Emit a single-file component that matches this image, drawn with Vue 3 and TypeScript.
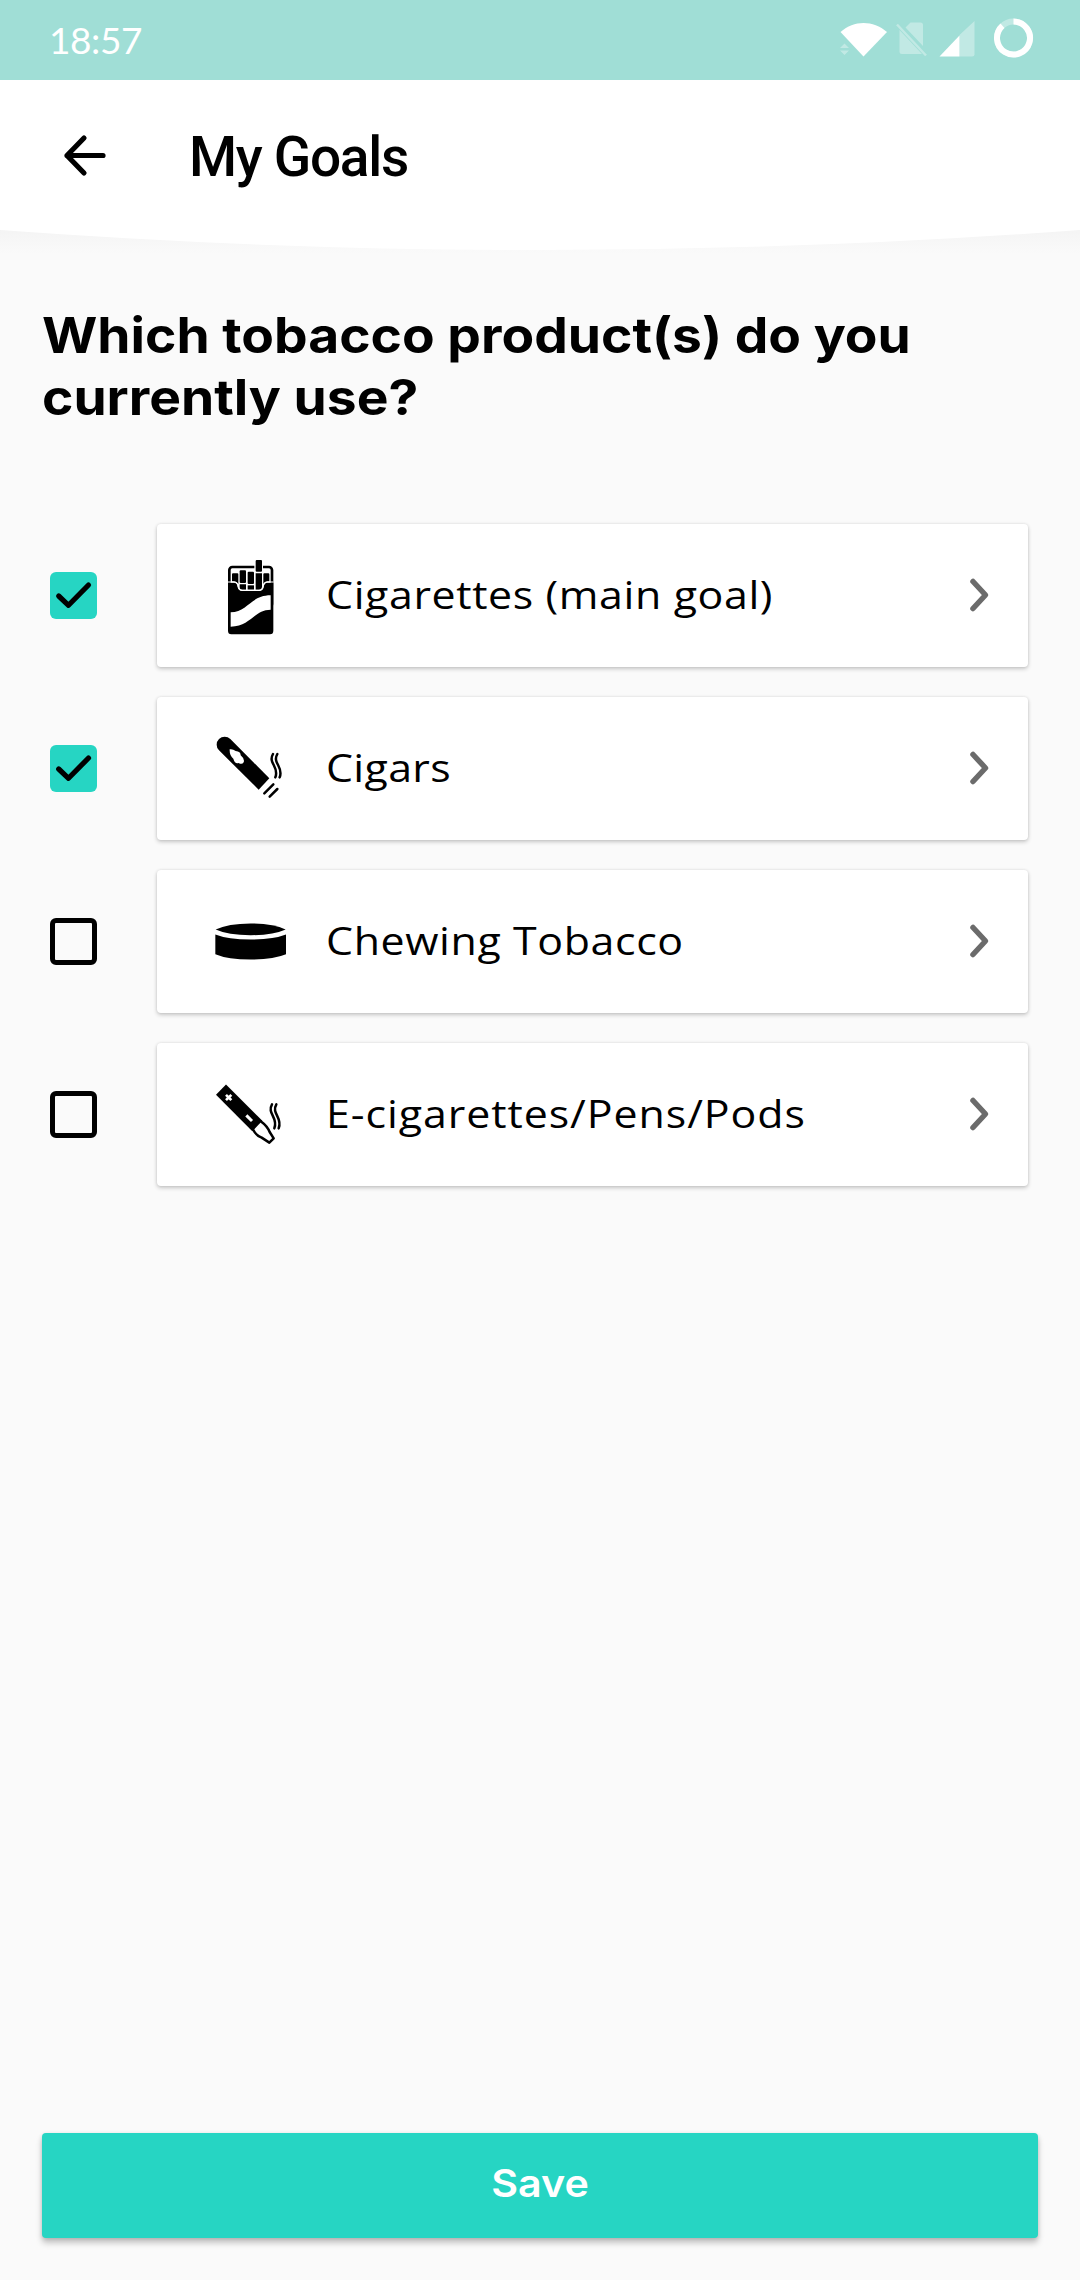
<script setup lang="ts">
import { reactive } from 'vue'

type IconName = 'pack' | 'cigar' | 'chew' | 'vape'

interface Product {
  id: IconName
  label: string
  checked: boolean
}

const products = reactive<Product[]>([
  { id: 'pack', label: 'Cigarettes (main goal)', checked: true },
  { id: 'cigar', label: 'Cigars', checked: true },
  { id: 'chew', label: 'Chewing Tobacco', checked: false },
  { id: 'vape', label: 'E-cigarettes/Pens/Pods', checked: false },
])
</script>

<template>
  <div class="screen">
    <div class="status">
      <span class="clock">18:57</span>
      <svg class="status-icons" width="200" height="48" viewBox="0 0 200 48" fill="#fff">
        <path d="M0.5 14C14 2 33 2 47 14L23.500 38.500Z" />
        <g opacity="0.35">
          <path d="M0 30L4.500 25.500L9 30ZM0 32.500H9L4.500 37Z" />
          <path d="M65.500 9.500L70.500 4.500H80.500Q83 4.500 83 7V28Z" />
          <path d="M59.500 12L82 36H62Q59.500 36 59.500 33.500Z" />
          <path d="M57 6.500L86 37.500" stroke="#fff" stroke-width="2.500" />
          <path d="M119.500 17L134.500 3V36.500Q134.500 38.500 132 38.500H119.500Z" />
        </g>
        <path d="M99.500 38.500L119.500 17.500V38.500Z" />
        <circle cx="173.500" cy="20" r="16.500" fill="none" stroke="#fff" stroke-opacity="0.35" stroke-width="6" />
        <path d="M173.500 3.500A16.500 16.500 0 1 1 162.500 7.700" fill="none" stroke="#fff" stroke-width="6" />
      </svg>
    </div>

    <header class="header">
      <svg class="back" width="48" height="48" viewBox="0 0 48 48">
        <path d="M24 6L7 23.500L24 41M7 23.500H43" />
      </svg>
      <h1 class="title">My Goals</h1>
    </header>
    <svg class="curve" width="1080" height="50" viewBox="0 0 1080 50">
      <defs>
        <linearGradient id="shade" x1="0" y1="0" x2="0" y2="1">
          <stop offset="0.25" stop-color="#f4f4f4" />
          <stop offset="1" stop-color="#fafafa" />
        </linearGradient>
      </defs>
      <rect width="1080" height="34" fill="url(#shade)" />
      <path d="M0 0H1080V10Q810 30 540 30T0 10Z" fill="#fff" />
    </svg>

    <main class="content">
      <h2 class="question">Which tobacco product(s) do you<br />currently use?</h2>

      <ul class="list">
        <li v-for="p in products" :key="p.id" class="row">
          <button class="box" :class="{ on: p.checked }" @click="p.checked = !p.checked">
            <svg v-if="p.checked" width="47" height="47" viewBox="0 0 47 47">
              <path d="M8.700 24L18.500 33.300L38.500 13" />
            </svg>
          </button>
          <div class="card">
            <svg class="icon" width="96" height="96" viewBox="0 0 288 288">
              <g v-if="p.id === 'pack'">
                <rect x="79" y="57" width="128" height="120" rx="9" fill="none" stroke="#000" stroke-width="8" />
                <path d="M75 104H93Q103 104 104 116Q106 129 118 129H168Q180 129 182 116Q184 104 193 104H211V248Q211 258.500 201 258.500H85Q75 258.500 75 248Z" />
                <path d="M108 104H178V118Q176 125 168 125H118Q110 125 108 118Z" fill="#fff" />
                <path d="M87 79Q87 76 90 76H103Q106 76 106 79V108Q100 100 93 100H87Z" />
                <path d="M181 79Q181 76 184 76H196Q199 76 199 79V100H193Q186 100 181 108Z" />
                <rect x="110" y="67" width="19" height="38" rx="3" />
                <path d="M110 109H129V125H118Q110 125 110 117Z" />
                <rect x="134" y="71" width="19" height="37" rx="3" />
                <rect x="134" y="112" width="19" height="13" />
                <rect x="154" y="36" width="26" height="38" fill="#fff" />
                <rect x="158" y="36" width="19" height="35" rx="3" />
                <path d="M158 76H177V116Q176 125 168 125H158Z" />
                <path d="M75 102H93Q103 102 105 114Q107 127 118 127H168Q179 127 181 114Q183 102 193 102H211" fill="none" stroke="#fff" stroke-width="3.500" />
                <path d="M83 193C133 193 143 142 203 142V185C153 185 143 236 83 236Z" fill="#fff" />
              </g>
              <g v-else-if="p.id === 'cigar'">
                <path d="M82 54L199 172L167 206L48 88A24 24 0 0 1 82 54Z" />
                <path d="M80 85Q89 83 98 90Q113 91 113 103Q126 114 122 124Q117 132 107 126Q96 130 91 113Q79 103 80 85Z" fill="#fff" />
                <g class="line">
                  <path d="M211 190L184 217M223 204L200 227" />
                  <path d="M210 99C194 127 230 137 217 169M223 99C207 127 243 137 230 169" />
                </g>
              </g>
              <g v-else-if="p.id === 'chew'">
                <path d="M38 106.500Q75 88.500 143 88.500T248 106.500Q211 123.500 143 123.500T38 106.500Z" />
                <path d="M37 121.500Q75 136.500 143 136.500T249 121.500V180.500Q211 196.500 143 196.500T37 180.500Z" />
              </g>
              <g v-else>
                <path d="M69 52.500L178 161.500L148 192.500L39 83.500Z" />
                <path d="M77 91.500m-8 -8l16 16m0 -16l-16 16" fill="none" stroke="#fff" stroke-width="8" />
                <path d="M130 145L147 162" stroke="#fff" stroke-width="9" />
                <g class="line">
                  <path d="M151 189Q159 205 176 212L199 227L212 214L200 195Q193 177 175 164" />
                  <path d="M207 112C191 140 227 152 214 184M220 112C204 140 240 152 227 184" />
                </g>
              </g>
            </svg>
            <span class="label" :class="p.id">{{ p.label }}</span>
            <svg class="chevron" width="24" height="36" viewBox="0 0 24 36">
              <path d="M5 4.500L17.500 18L5 31.500" />
            </svg>
          </div>
        </li>
      </ul>
    </main>

    <footer class="footer">
      <button class="save"><span class="save-text">Save</span></button>
    </footer>
  </div>
</template>

<style>
body {
  margin: 0;
  background: #fafafa;
}
</style>

<style scoped>
.screen {
  width: 1080px;
  height: 2280px;
  display: flex;
  flex-direction: column;
  background: #fafafa;
  font-family: Inter, 'Liberation Sans', sans-serif;
  color: #000;
  overflow: hidden;
}
.status {
  height: 80px;
  flex: none;
  background: #a0ded6;
  display: flex;
  justify-content: space-between;
  align-items: center;
  padding: 0 40px 0 49px;
  box-sizing: border-box;
}
.clock {
  font: 400 37px/48px Lato, sans-serif;
  letter-spacing: -0.400px;
  color: #fff;
}
.status-icons {
  margin-top: 4px;
}
.header {
  height: 140px;
  flex: none;
  display: flex;
  align-items: center;
  padding: 0 60px;
  box-sizing: border-box;
  background: #fff;
}
.back {
  margin-top: 11px;
  fill: none;
  stroke: #000;
  stroke-width: 5.200;
  stroke-linecap: round;
  stroke-linejoin: round;
}
.title {
  margin: 13px 0 0 81px;
  font: 500 55px/64px Roboto, sans-serif;
  letter-spacing: -1.300px;
}
.curve {
  flex: none;
  display: block;
}
.content {
  flex: 1;
  padding: 35px 52px 0 42px;
}
.question {
  margin: 0;
  font-size: 49px;
  line-height: 62px;
  font-weight: 700;
  white-space: nowrap;
  transform: scaleX(1.089);
  transform-origin: 0 50%;
}
.list {
  list-style: none;
  margin: 95px 0 0;
  padding: 0;
  display: flex;
  flex-direction: column;
  gap: 30px;
}
.row {
  display: flex;
  align-items: center;
  height: 143px;
  padding-left: 8px;
}
.box {
  width: 47px;
  height: 47px;
  flex: none;
  padding: 0;
  box-sizing: border-box;
  border: 5px solid #000;
  border-radius: 6px;
  background: none;
}
.box.on {
  border: 0;
  background: #26d5c3;
}
.box svg {
  display: block;
  fill: none;
  stroke: #000;
  stroke-width: 5.200;
  stroke-linecap: round;
  stroke-linejoin: round;
}
.card {
  flex: 1;
  height: 143px;
  margin-left: 60px;
  padding: 0 36px 0 46px;
  box-sizing: border-box;
  display: flex;
  align-items: center;
  background: #fff;
  border-radius: 4px;
  box-shadow: 0 2px 4px rgba(0, 0, 0, 0.2), 0 0 3px rgba(0, 0, 0, 0.1);
}
.icon {
  flex: none;
}
.line {
  fill: none;
  stroke: #000;
  stroke-width: 7.500;
  stroke-linecap: round;
  stroke-linejoin: round;
}
.label {
  flex: 1;
  margin: 0 0 4px 27px;
  font: 400 39px/50px 'Open Sans', sans-serif;
  letter-spacing: 0.550px;
  white-space: nowrap;
  transform: scaleX(1.1);
  transform-origin: 0 50%;
}
.label.cigar {
  letter-spacing: 0.300px;
}
.label.vape {
  letter-spacing: 0.850px;
}
.chevron {
  flex: none;
  margin-bottom: 2px;
  fill: none;
  stroke: #6b6b6b;
  stroke-width: 5.500;
  stroke-linecap: round;
  stroke-linejoin: round;
}
.footer {
  flex: none;
  padding: 0 42px 42px;
}
.save {
  display: block;
  width: 100%;
  height: 105px;
  padding: 0 0 6px;
  border: 0;
  border-radius: 4px;
  background: #26d5c3;
  color: #fff;
  font: 600 38px/50px Inter, sans-serif;
  box-shadow: 0 5px 6px rgba(0, 0, 0, 0.22), 0 1px 4px rgba(0, 0, 0, 0.12);
}
.save-text {
  display: inline-block;
  transform: scaleX(1.085);
}
</style>
